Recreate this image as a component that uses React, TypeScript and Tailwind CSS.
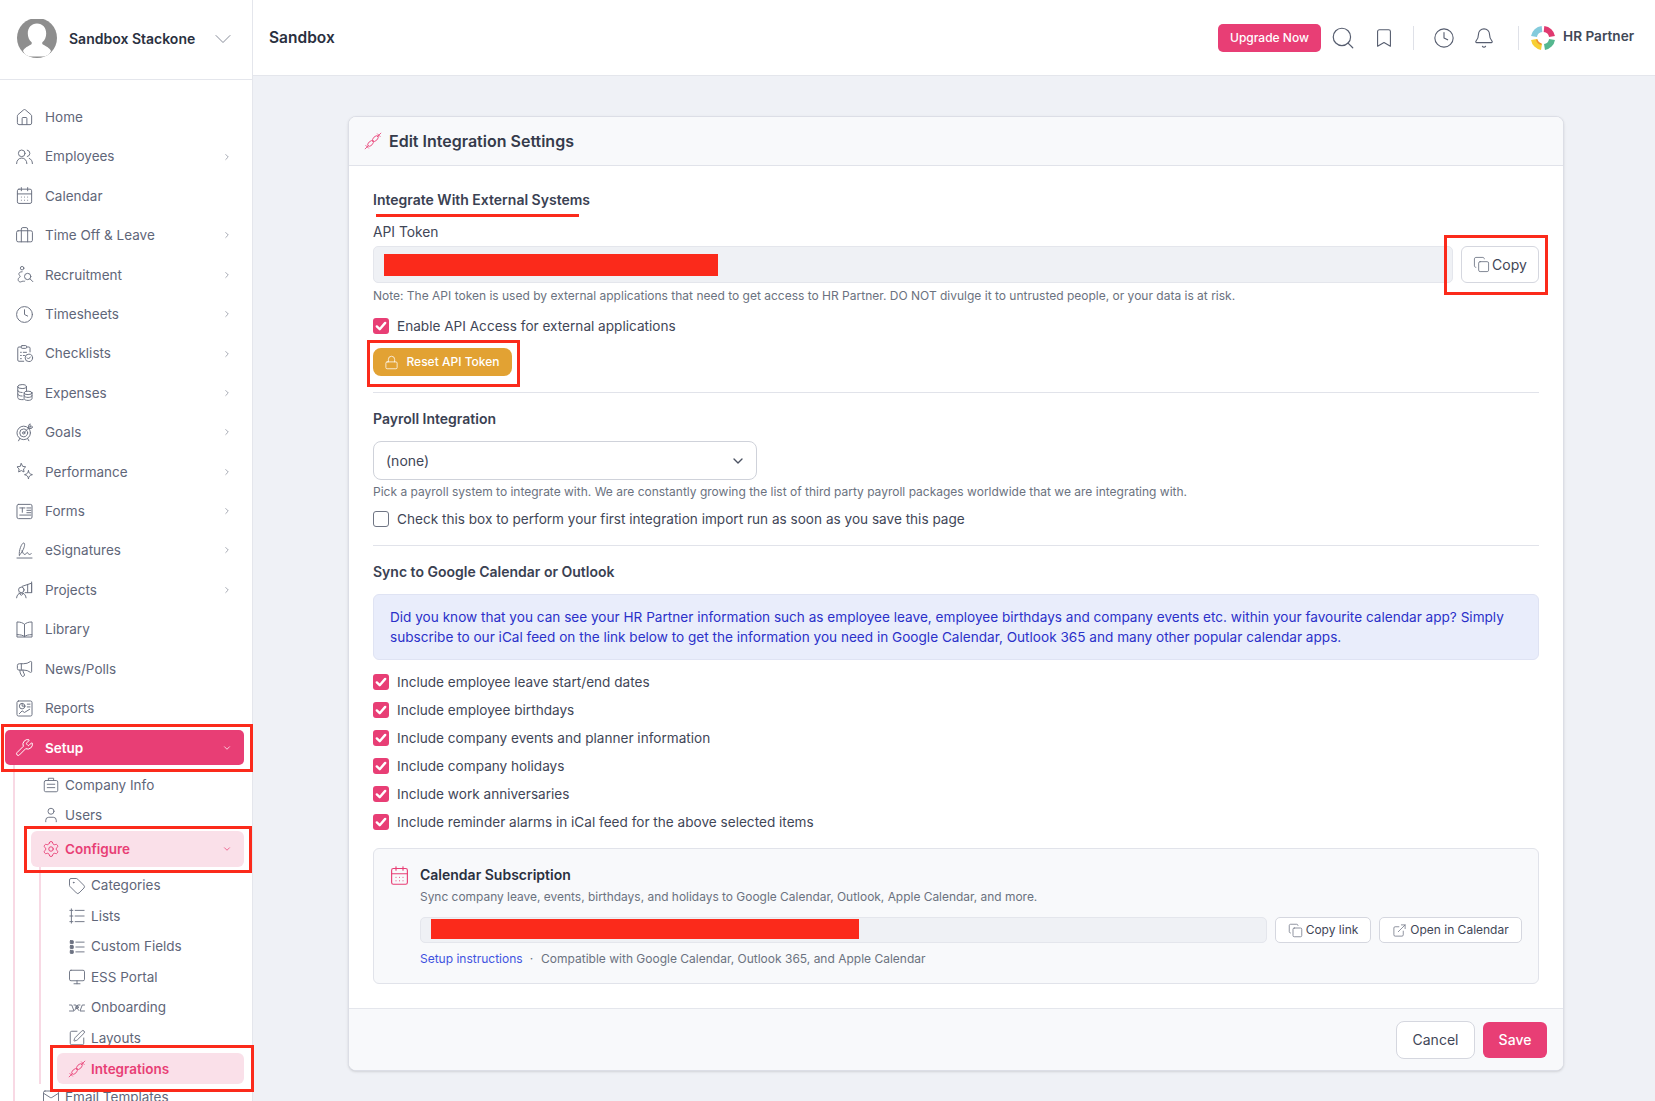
import React from "react";
import {
  House, CalendarDays, Briefcase, Clock, Megaphone, Wrench, User, Settings, Tag, Monitor,
  Handshake, SquarePen, Mail, Search, Bookmark, Bell, Copy, ExternalLink, Lock, ChevronDown, ChevronRight,
} from "lucide-react";

type IconProps = { size?: number; strokeWidth?: number; className?: string };

function mk(children: React.ReactNode) {
  return function DrawnIcon({ size = 24, strokeWidth = 1.3, className = "" }: IconProps) {
    return (
      <svg viewBox="0 0 24 24" width={size} height={size} fill="none" stroke="currentColor" strokeWidth={strokeWidth} strokeLinecap="round" strokeLinejoin="round" className={className}>
        {children}
      </svg>
    );
  };
}

const People = mk(<><circle cx="8.5" cy="8" r="4.2" /><path d="M2 21c0-4.2 2.8-7 6.5-7s6.5 2.8 6.5 7" /><path d="M15.5 3.9a4.2 4.2 0 0 1 0 8.2" /><path d="M18 14.4c2.4.8 4 3.3 4 6.6" /></>);
const Recruit = mk(<><circle cx="9" cy="4" r="2.2" /><path d="M9 8.5c-3 0-4.5 1.5-4 3.5.3 1.2 1.6 1.7 1.6 2.6 0 .9-2.6 1.2-2.6 3.800 0 2.200 1.500 3 3 3 1.300 0 1.800-1 3-1s1.500.6 2.400 0" /><circle cx="16" cy="14.5" r="4" /><path d="m19 17.5 3.5 3.5" /></>);
const Checklist = mk(<><rect x="8" y="2" width="6.5" height="3.5" rx="1" /><path d="M8 3.8H5a1.5 1.5 0 0 0-1.500 1.500v15A1.500 1.500 0 0 0 5 21.800h6" /><path d="M14.5 3.8h3A1.500 1.500 0 0 1 19 5.300V10" /><path d="M7 10.500h1M7 14.500h1M7 18.500h1M10.500 10.500h4M10.500 14.500h1.500" /><circle cx="17.5" cy="17.5" r="4.7" /><path d="m15.500 17.500 1.500 1.500 2.500-2.700" /></>);
const Expenses = mk(<><ellipse cx="9" cy="4.5" rx="5.5" ry="2.5" /><path d="M3.5 4.5v14c0 1.400 2 2.500 5 2.500h2M14.500 4.500V10M3.500 9.500c0 1.400 2.500 2.500 5.500 2.500M3.500 14c0 1.400 2.500 2.500 5.500 2.500" /><ellipse cx="16.5" cy="12.5" rx="5" ry="2.2" /><path d="M11.500 12.500v7.200c0 1.200 2.200 2.300 5 2.300s5-1.100 5-2.300v-7.200M11.500 16c0 1.200 2.200 2.200 5 2.200s5-1 5-2.200" /></>);
const Goals = mk(<><circle cx="11" cy="12.5" r="8.5" /><circle cx="11" cy="12.5" r="5" /><circle cx="11" cy="12.5" r="1.5" /><path d="M11 12.500 20 3.500M17 3.500v3.500h3.500l2-2H19V1.500zM6 19.500 4.500 22.500M16 19.500l1.500 3" /></>);
const Perf = mk(<><path d="m8 2 1.700 3.500 3.800.6-2.700 2.700.6 3.800L8 10.800l-3.400 1.800.6-3.800L2.500 6.100l3.800-.6z" /><path d="M17 11c.4 3 1.600 4.200 5 5-3.400.8-4.600 2-5 5.500-.4-3.500-1.600-4.700-5-5.500 3.400-.8 4.600-2 5-5z" /></>);
const Forms = mk(<><rect x="2.5" y="3" width="19" height="18" rx="2" /><path d="M6 7.500h6.500M9.250 7.500v5.500M15 7.500h5M15 10.500h5M15 13.500h5M6 16.500h14" /></>);
const Sign = mk(<><path d="M2.500 21.500h19" /><path d="M5.500 18C4.500 12 8.500 2.500 11 2.500c2.300 0 1 6.500-2.500 11.500-1.300 1.900-2.400 4-3 4z" /><path d="M9 12c.8 3 1.500 5 3.500 5 1.700 0 1.800-2.500 3-2.500s1 2.500 2.500 2.500c1 0 1.600-.4 2.500-1" /></>);
const Projects = mk(<><circle cx="8" cy="12.5" r="3.5" /><path d="M2 22.500c.3-3.700 2.800-6 6-6s5.700 2.300 6 6M5 16.500l3 3 3-3M9 8l12-4v12h-8" /><path d="M21 2.500V16M16 5.500V16" /></>);
const Book = mk(<><path d="M12 5.500C10 3.500 7 2.500 2.500 2.500v16c4.500 0 7.500.8 9.500 2.500 2-1.700 5-2.500 9.500-2.500v-16C17 2.500 14 3.500 12 5.500z" /><path d="M12 5.500V21M2.500 18.500v3h19v-3" /></>);
const Reports = mk(<><rect x="2.5" y="2.5" width="19" height="19" rx="2" /><circle cx="9" cy="9" r="3.5" /><path d="M9 5.500V9h3.500M15.500 6.500H19M15.500 10H19M5.500 18.500l3.500-3.500 3 2 6.500-4" /></>);
const Helix = mk(<><path d="M1.500 22.500 5.500 18.500M18.500 5.500l4-4" /><ellipse cx="8.75" cy="15.25" rx="4.6" ry="2.7" transform="rotate(-45 8.75 15.25)" /><ellipse cx="15.25" cy="8.75" rx="4.6" ry="2.7" transform="rotate(-45 15.25 8.75)" /><path d="M18 2.500l3.500 3.500M2.500 18l3.500 3.500" /></>);
const Company = mk(<><rect x="3" y="6" width="18" height="15" rx="2" /><path d="M8.500 6V3h7v3M7 11h10M7 15.500h10" /></>);
const Lists = mk(<><path d="M9.500 4.500h12M9.500 12h12M9.500 19.500h12" /><path d="M2.500 4.500h4M2.500 12h4M2.500 19.500h4M4.500 2.500v19" /></>);
const Fields = mk(<><rect x="3" y="3.5" width="4" height="4" rx=".5" fill="currentColor" /><rect x="3" y="10" width="4" height="4" rx=".5" fill="currentColor" /><rect x="3" y="16.5" width="4" height="4" rx=".5" fill="currentColor" /><path d="M10.500 5.500h11M10.500 12h11M10.500 18.500h11" /></>);
const Onboard = mk(<><path d="M2 8h3l3 8H2M22 8h-3l-3 8h6" /><path d="M8 8h2.500l3.500 7M16 8h-3l-4 7" /><circle cx="12" cy="11" r="1.8" /></>);

const nav: [string, any, boolean][] = [
  ["Home", House, false],
  ["Employees", People, true],
  ["Calendar", CalendarDays, false],
  ["Time Off & Leave", Briefcase, true],
  ["Recruitment", Recruit, true],
  ["Timesheets", Clock, true],
  ["Checklists", Checklist, true],
  ["Expenses", Expenses, true],
  ["Goals", Goals, true],
  ["Performance", Perf, true],
  ["Forms", Forms, true],
  ["eSignatures", Sign, true],
  ["Projects", Projects, true],
  ["Library", Book, false],
  ["News/Polls", Megaphone, false],
  ["Reports", Reports, false],
];

const config: [string, any][] = [
  ["Categories", Tag],
  ["Lists", Lists],
  ["Custom Fields", Fields],
  ["ESS Portal", Monitor],
  ["Onboarding", Onboard],
  ["Layouts", SquarePen],
];

const calendarOptions = [
  "Include employee leave start/end dates",
  "Include employee birthdays",
  "Include company events and planner information",
  "Include company holidays",
  "Include work anniversaries",
  "Include reminder alarms in iCal feed for the above selected items",
];

function Check({ on = true }: { on?: boolean }) {
  return on ? (
    <span className="flex h-4 w-4 shrink-0 items-center justify-center rounded-[3px] bg-[#e83e75]">
      <svg viewBox="0 0 16 16" className="h-4 w-4" fill="none" stroke="#fff" strokeWidth="2.4" strokeLinecap="round" strokeLinejoin="round">
        <path d="M3.8 8.4 6.7 11.2 12.2 4.9" />
      </svg>
    </span>
  ) : (
    <span className="block h-4 w-4 shrink-0 rounded-[3px] border border-[#6f7584] bg-white" />
  );
}

function CheckRow({ label, on = true }: { label: string; on?: boolean }) {
  return (
    <div className="flex h-4 items-center gap-2">
      <Check on={on} />
      <span className="text-[13.6px] text-[#3f4657]">{label}</span>
    </div>
  );
}

function Logo() {
  return (
    <svg viewBox="0 0 24 24" className="h-6 w-6">
      <g fill="none" strokeWidth="6">
        <path d="M3 10.500A9 9 0 0 1 11 3" stroke="#84cbdc" />
        <path d="M13 3a9 9 0 0 1 8 7.500" stroke="#e03a70" />
        <path d="M21 13.500A9 9 0 0 1 13.500 21" stroke="#55b78f" />
        <path d="M10.500 21A9 9 0 0 1 3 13.500" stroke="#f7cf34" />
      </g>
      <path d="M5.800 13.500a6.400 6.400 0 0 0 4.700 4.700" fill="none" stroke="#ef8f2f" strokeWidth="1.5" />
    </svg>
  );
}

function Avatar() {
  return (
    <svg viewBox="0 0 40 40" className="h-10 w-10 shrink-0">
      <defs>
        <clipPath id="av">
          <circle cx="20" cy="19" r="20" />
        </clipPath>
      </defs>
      <circle cx="20" cy="19" r="20" fill="#8e8e8e" />
      <g clipPath="url(#av)">
        <path d="M20 4.500c-5.600 0-9.200 4.300-9.200 10 0 3.600 1.400 6.600 3.600 8.600.6.600.6 1.700-.2 2.300-3 1.700-6.600 3-8.200 6.600L9 37.500h22l3-5.500c-1.600-3.600-5.200-4.900-8.200-6.600-.8-.6-.8-1.700-.2-2.300 2.200-2 3.600-5 3.600-8.600 0-5.700-3.600-10-9.200-10z" fill="#fff" />
      </g>
      <path d="M0 36h8l1 4H0zM40 36h-8l-1 4h9z" fill="#fff" />
    </svg>
  );
}

function NavItem({ label, Icon, arrow }: { label: string; Icon: any; arrow: boolean }) {
  return (
    <div className="flex h-[39.4px] items-center pl-[15px] pr-[20px] text-[#5f6679]">
      <Icon size={19} strokeWidth={1.25} className="shrink-0 text-[#6c7282]" />
      <span className="ml-[11px] flex-1 text-[13.5px]">{label}</span>
      {arrow && <ChevronRight size={10} strokeWidth={1.6} className="text-[#7b8190]" />}
    </div>
  );
}

function SubItem({ label, Icon, h = "h-[30px]" }: { label: string; Icon: any; h?: string }) {
  return (
    <div className={`flex ${h} items-center pl-[11px] text-[13.5px] text-[#5f6679]`}>
      <Icon size={18} strokeWidth={1.25} className="shrink-0 text-[#6c7282]" />
      <span className="ml-[5px] whitespace-nowrap">{label}</span>
    </div>
  );
}

function Sidebar() {
  return (
    <aside className="flex h-[1101px] w-[253px] shrink-0 flex-col overflow-hidden border-r border-[#e4e6ec] bg-white">
      <div className="flex h-[80px] shrink-0 items-center border-b border-[#e4e6ec] pl-[17px] pr-[15px] pb-[2px]">
        <Avatar />
        <span className="ml-3 flex-1 text-[14px] font-semibold text-[#2a3040]">Sandbox Stackone</span>
        <ChevronDown size={28} strokeWidth={0.7} className="text-[#6c7282]" />
      </div>
      <div className="pt-[17.5px]">
        {nav.map(([l, I, a]) => (
          <NavItem key={l} label={l} Icon={I} arrow={a} />
        ))}
      </div>
      <div className="ml-[5px] mr-[8px] mt-[2.5px] flex h-[35px] shrink-0 items-center rounded-[5px] bg-[#e83e75] pl-[10px] pr-[12px] text-white">
        <Wrench size={19} strokeWidth={1.25} />
        <span className="ml-[11px] flex-1 text-[13.5px] font-semibold">Setup</span>
        <ChevronDown size={10} strokeWidth={1.8} />
      </div>
      <div className="ml-[13px] mr-[8px] border-l-2 border-[#f8d9e4] pl-[16px]">
        <SubItem label="Company Info" Icon={Company} h="h-[32px] mt-[4px]" />
        <SubItem label="Users" Icon={User} h="h-[28px]" />
        <div className="mt-[2px] flex h-[36px] items-center rounded-[6px] bg-[#fae0e9] pl-[11px] pr-[12px] text-[#e83e75]">
          <Settings size={18} strokeWidth={1.25} />
          <span className="ml-[5px] flex-1 text-[13.5px] font-semibold">Configure</span>
          <ChevronDown size={10} strokeWidth={1.8} />
        </div>
        <div className="ml-[8px] border-l-2 border-[#f8d9e4] pl-[16px]">
          <div className="pt-[3px]">
            {config.map(([l, I]) => (
              <SubItem key={l} label={l} Icon={I} h="h-[30.5px]" />
            ))}
          </div>
          <div className="flex h-[31px] items-center rounded-[6px] bg-[#fae0e9] pl-[11px] text-[#e83e75]">
            <Helix size={18} strokeWidth={1.1} />
            <span className="ml-[5px] text-[13.5px] font-semibold">Integrations</span>
          </div>
        </div>
        <SubItem label="Email Templates" Icon={Mail} h="h-[26px]" />
      </div>
    </aside>
  );
}

function Topbar() {
  return (
    <header className="flex h-[76px] shrink-0 items-center border-b border-[#e4e6ec] bg-white pl-[16px] pr-[20px]">
      <span className="flex-1 text-[15.5px] font-semibold text-[#2a3040]">Sandbox</span>
      <button className="h-[28px] w-[103px] rounded-[5px] bg-[#e83e75] text-[12px] font-medium text-white">Upgrade Now</button>
      <Search size={26} strokeWidth={1.1} className="ml-[9px] text-[#565d6f]" />
      <Bookmark size={22} strokeWidth={1.2} className="ml-[16.5px] text-[#565d6f]" />
      <span className="ml-[18.5px] h-6 w-px bg-[#dfe1e8]" />
      <Clock size={22} strokeWidth={1.2} className="ml-[19px] text-[#565d6f]" />
      <Bell size={22} strokeWidth={1.2} className="ml-[18px] text-[#565d6f]" />
      <span className="ml-[23px] h-6 w-px bg-[#dfe1e8]" />
      <span className="ml-[12px]"><Logo /></span>
      <span className="ml-2 -mt-[2px] w-[72px] whitespace-nowrap text-[13.6px] font-semibold text-[#414857]">HR Partner</span>
    </header>
  );
}

function Card() {
  return (
    <section className="ml-[95px] mr-[91px] mt-[40px] flex h-[955px] flex-col overflow-hidden rounded-[8px] border border-[#dcdee6] bg-white shadow-sm">
      <div className="flex h-[49px] shrink-0 items-center border-b border-[#e1e3ea] bg-[#f8f9fb] pl-[15px]">
        <Helix size={18} strokeWidth={1.1} className="text-[#e83e75]" />
        <span className="ml-[7px] text-[16px] font-semibold text-[#353b4b]">Edit Integration Settings</span>
      </div>
      <div className="flex-1 px-6 pt-6">
        <h3 className="h-5 text-[14px] font-semibold leading-5 text-[#3a4152]">Integrate With External Systems</h3>
        <div className="mt-3 h-5 text-[13.8px] leading-5 text-[#3f4657]">API Token</div>
        <div className="mt-1 flex h-[37px] gap-2">
          <div className="flex-1 rounded-[5px] border border-[#e4e6ec] bg-[#eff1f5]" />
          <button className="flex h-[37px] w-[78px] items-center justify-center gap-[2px] rounded-[6px] border border-[#d5d7df] bg-white text-[14px] text-[#3f4657]">
            <Copy size={17} strokeWidth={1.2} className="text-[#6c7282]" />
            Copy
          </button>
        </div>
        <p className="mt-[5px] h-4 text-[12px] leading-4 text-[#6b7280]">
          Note: The API token is used by external applications that need to get access to HR Partner. DO NOT divulge it to untrusted people, or your data is at risk.
        </p>
        <div className="mt-[14px]"><CheckRow label="Enable API Access for external applications" /></div>
        <button className="mt-[14px] flex h-[28px] w-[139px] items-center justify-center gap-2 rounded-[8px] bg-[#e2a233] pr-[2px] text-[12px] font-medium text-white">
          <Lock size={15} strokeWidth={1.2} />
          Reset API Token
        </button>
        <div className="mt-4 h-px bg-[#e1e3ea]" />
        <h3 className="mt-4 h-5 text-[14px] font-semibold leading-5 text-[#3a4152]">Payroll Integration</h3>
        <div className="mt-3 flex h-[39px] w-[384px] items-center justify-between rounded-[8px] border border-[#cfd2da] bg-white pl-[12px] pr-[10px] text-[14px] text-[#3f4657]">
          (none)
          <ChevronDown size={16} strokeWidth={2} className="text-[#4b5262]" />
        </div>
        <p className="mt-1 h-4 text-[12px] leading-4 text-[#6b7280]">
          Pick a payroll system to integrate with. We are constantly growing the list of third party payroll packages worldwide that we are integrating with.
        </p>
        <div className="mt-[11px]"><CheckRow label="Check this box to perform your first integration import run as soon as you save this page" on={false} /></div>
        <div className="mt-[18px] h-px bg-[#e1e3ea]" />
        <h3 className="mt-4 h-5 text-[14px] font-semibold leading-5 text-[#3a4152]">Sync to Google Calendar or Outlook</h3>
        <div className="mt-3 flex h-[66px] flex-col justify-center rounded-[6px] border border-[#dfe3f3] bg-[#e9edfb] px-4 text-[13.6px] leading-[20px] text-[#2b30c9]">
          <p>Did you know that you can see your HR Partner information such as employee leave, employee birthdays and company events etc. within your favourite calendar app? Simply subscribe to our iCal feed on the link below to get the information you need in Google Calendar, Outlook 365 and many other popular calendar apps.</p>
        </div>
        <div className="mt-[14px] flex flex-col gap-3">
          {calendarOptions.map((o) => <CheckRow key={o} label={o} />)}
        </div>
        <div className="mt-[18px] flex h-[136px] gap-3 rounded-[6px] border border-[#e1e3ea] bg-[#f8f9fb] px-4 pt-4">
          <CalendarDays size={21} strokeWidth={1.3} className="-mx-[1.5px] shrink-0 text-[#e83e75]" />
          <div className="min-w-0 flex-1">
            <div className="h-5 text-[14px] font-semibold leading-5 text-[#2a3040]">Calendar Subscription</div>
            <div className="mt-1 h-4 text-[11.95px] leading-4 text-[#6b7280]">Sync company leave, events, birthdays, and holidays to Google Calendar, Outlook, Apple Calendar, and more.</div>
            <div className="mt-3 flex h-[26px] gap-2">
              <div className="flex-1 rounded-[5px] border border-[#e4e6ec] bg-[#eff1f5]" />
              <button className="flex w-[96px] items-center justify-center gap-[3px] rounded-[5px] border border-[#d5d7df] bg-white text-[12px] text-[#3f4657]">
                <Copy size={15} strokeWidth={1.2} className="text-[#6c7282]" />
                Copy link
              </button>
              <button className="flex w-[143px] items-center justify-center gap-[3px] rounded-[5px] border border-[#d5d7df] bg-white text-[12px] text-[#3f4657]">
                <ExternalLink size={15} strokeWidth={1.2} className="text-[#6c7282]" />
                Open in Calendar
              </button>
            </div>
            <div className="mt-2 h-4 text-[12px] leading-4 text-[#6b7280]">
              <span className="text-[#3f53e0]">Setup instructions</span>
              <span className="ml-[7px] mr-[8px]">·</span>
              Compatible with Google Calendar, Outlook 365, and Apple Calendar
            </div>
          </div>
        </div>
      </div>
      <div className="flex h-[62px] shrink-0 items-center justify-end gap-2 border-t border-[#e4e6ec] bg-[#f8f9fb] pr-[16px]">
        <button className="h-[38px] w-[79px] rounded-[8px] border border-[#d5d7df] bg-white text-[14px] text-[#3f4657]">Cancel</button>
        <button className="h-[36px] w-[64px] rounded-[6px] bg-[#e83e75] text-[14px] font-medium text-white">Save</button>
      </div>
    </section>
  );
}

function Marks() {
  const frame = "pointer-events-none absolute border-[3px] border-[#fb2a1b]";
  const fill = "pointer-events-none absolute bg-[#fb2a1b]";
  return (
    <>
      <div className={`${frame} left-[1px] top-[724px] h-[48px] w-[252px]`} />
      <div className={`${frame} left-[24px] top-[826px] h-[47px] w-[228px]`} />
      <div className={`${frame} left-[50px] top-[1045px] h-[47px] w-[204px]`} />
      <div className={`${frame} left-[1444px] top-[235px] h-[60px] w-[104px]`} />
      <div className={`${frame} left-[367px] top-[340px] h-[47px] w-[153px]`} />
      <div className={`${fill} left-[376px] top-[214px] h-[3px] w-[203px]`} />
      <div className={`${fill} left-[384px] top-[254px] h-[22px] w-[334px]`} />
      <div className={`${fill} left-[431px] top-[919px] h-[20px] w-[428px]`} />
    </>
  );
}

export default function App() {
  return (
    <div className="relative flex h-[1101px] w-[1655px] overflow-hidden bg-[#eff1f6]" style={{ fontFamily: "Inter, sans-serif" }}>
      <Sidebar />
      <main className="flex min-w-0 flex-1 flex-col">
        <Topbar />
        <Card />
      </main>
      <Marks />
    </div>
  );
}
